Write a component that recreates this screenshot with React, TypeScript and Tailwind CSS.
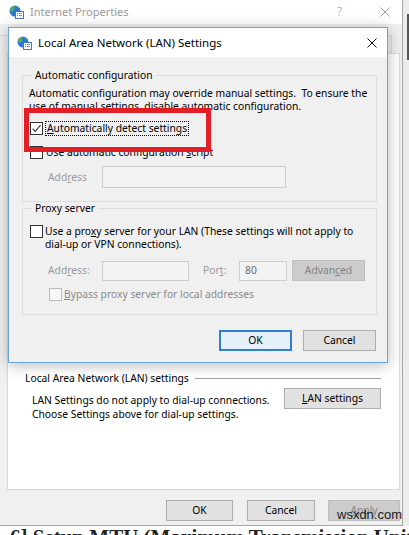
import type { ReactNode } from "react";

function AppIcon() {
  return (
    <svg width="15" height="14" viewBox="0 0 15 14" aria-hidden="true">
      <circle cx="6" cy="6" r="5.5" fill="#2c78d2" />
      <path d="M1.2 4.6C2 2.4 3.6 1 5.6.9c.4.8-.3 1.4-1 1.7-.9.4-.6 1.3.1 1.6.6.3.4 1-.3 1.2-.9.2-1.5.9-1.4 1.9-.9-.5-1.6-1.5-1.8-2.7z" fill="#5db548" />
      <path d="M7.4 1.2c1.4.2 2.7 1.1 3.4 2.3-.7.2-1.4-.1-1.9-.6-.5-.5-1.2-.6-1.5-1.7z" fill="#5db548" />
      <rect x="6.5" y="6.5" width="8" height="7" fill="#ffffff" stroke="#4a78b0" />
      <line x1="8" y1="8.5" x2="9" y2="8.5" stroke="#2c78d2" />
      <line x1="10" y1="8.5" x2="13" y2="8.5" stroke="#7c9cc4" />
      <line x1="8" y1="10.5" x2="9" y2="10.5" stroke="#2c78d2" />
      <line x1="10" y1="10.5" x2="13" y2="10.5" stroke="#7c9cc4" />
    </svg>
  );
}

function CloseGlyph({ color }: { color: string }) {
  return (
    <svg width="10" height="10" viewBox="0 0 10 10" aria-hidden="true">
      <path d="M0.5 0.5L9.5 9.5M9.5 0.5L0.5 9.5" stroke={color} strokeWidth="1" />
    </svg>
  );
}

function Box({ checked = false, disabled = false }: { checked?: boolean; disabled?: boolean }) {
  return (
    <span
      className={
        disabled
          ? "flex h-[13px] w-[13px] shrink-0 items-center justify-center border border-[#bcbcbc] bg-[#f7f7f7]"
          : "flex h-[13px] w-[13px] shrink-0 items-center justify-center border border-[#333333] bg-white"
      }
    >
      {checked && (
        <svg width="11" height="11" viewBox="0 0 11 11" aria-hidden="true">
          <path d="M1.6 5.6L4.2 8.4L9.6 2.2" fill="none" stroke="#333333" strokeWidth="1.1" />
        </svg>
      )}
    </span>
  );
}

function Btn({
  children,
  w,
  focused = false,
  disabled = false,
}: {
  children: ReactNode;
  w: string;
  focused?: boolean;
  disabled?: boolean;
}) {
  let cls = "flex h-[21px] items-center justify-center border border-[#adadad] bg-[#e1e1e1] text-black";
  if (focused) cls = "flex h-[21px] items-center justify-center border-2 border-[#2f80d4] bg-[#e5f1fb] text-black";
  if (disabled) cls = "flex h-[21px] items-center justify-center border border-[#bfbfbf] bg-[#cccccc] text-[#838383]";
  return <div className={`${cls} ${w}`}>{children}</div>;
}

function LanDialog() {
  return (
    <div className="absolute left-[8px] top-[27px] flex h-[336px] w-[380px] flex-col border border-[#6aa6d6] bg-[#f0f0f0] shadow-[0_2px_14px_rgba(0,0,0,0.28)]">
      <div className="flex h-[29px] items-center bg-white pl-[8px] pr-[10px]">
        <AppIcon />
        <span className="ml-[6px] text-[11.5px] text-black">Local Area Network (LAN) Settings</span>
        <span className="ml-auto flex">
          <CloseGlyph color="#111111" />
        </span>
      </div>

      <div className="flex flex-1 flex-col pl-[13px] pr-[10px] pt-[12px] leading-[13px]">
        <fieldset className="border border-[#dcdcdc] px-[6px] pb-[13px] pt-[5px]">
          <legend className="ml-[3px] px-[3px] leading-[13px]">Automatic configuration</legend>
          <div className="whitespace-nowrap">
            Automatic configuration may override manual settings.{"\u00a0 "}To ensure the
            <br />
            use of manual settings, disable automatic configuration.
          </div>
          <div className="ml-[1px] mt-[8px] flex items-center gap-[2px]">
            <Box checked />
            <span className="border border-dotted border-black px-[1px]">
              <span className="underline">A</span>utomatically detect settings
            </span>
          </div>
          <div className="ml-[1px] mt-[10px] flex items-center gap-[2px]">
            <Box />
            <span className="px-[1px]">
              Use automatic configuration <span className="underline">s</span>cript
            </span>
          </div>
          <div className="mt-[7px] flex items-center pl-[19px]">
            <span className="w-[54px] text-[#9a9a9a]">
              Add<span className="underline">r</span>ess
            </span>
            <div className="h-[22px] w-[184px] border border-[#cccccc] bg-[#f3f3f3]" />
          </div>
        </fieldset>

        <fieldset className="border border-[#dcdcdc] px-[6px] pb-[13px] pt-[10px]">
          <legend className="ml-[3px] px-[3px] leading-[13px]">Proxy server</legend>
          <div className="ml-[1px] flex items-start gap-[2px]">
            <Box />
            <div className="whitespace-nowrap">
              Use a pro<span className="underline">x</span>y server for your LAN (These settings will not apply to
              <br />
              dial-up or VPN connections).
            </div>
          </div>
          <div className="mt-[9px] flex items-center pl-[19px] text-[#9a9a9a]">
            <span className="w-[54px]">
              Add<span className="underline">r</span>ess:
            </span>
            <div className="h-[20px] w-[87px] border border-[#cccccc] bg-[#f3f3f3]" />
            <span className="ml-[14px] w-[36px]">
              Por<span className="underline">t</span>:
            </span>
            <div className="flex h-[20px] w-[48px] items-center border border-[#cccccc] bg-[#f3f3f3] pl-[5px] text-[#6d6d6d]">
              80
            </div>
            <div className="ml-[5px]">
              <Btn w="w-[73px]" disabled>
                <span>
                  Advan<span className="underline">c</span>ed
                </span>
              </Btn>
            </div>
          </div>
          <div className="mt-[7px] flex items-center gap-[2px] pl-[20px] text-[#8a8a8a]">
            <Box disabled />
            <span>
              <span className="underline">B</span>ypass proxy server for local addresses
            </span>
          </div>
        </fieldset>

        <div className="mt-[15px] flex justify-end gap-[11px] pr-[1px]">
          <Btn w="w-[73px]" focused>
            OK
          </Btn>
          <Btn w="w-[73px]">Cancel</Btn>
        </div>
      </div>
    </div>
  );
}

export default function App() {
  const tabWidths = ["w-[52px]", "w-[54px]", "w-[50px]", "w-[52px]", "w-[68px]", "w-[58px]", "w-[60px]"];
  return (
    <div className="relative h-[535px] w-[409px] overflow-hidden bg-white font-['Noto_Sans',sans-serif] text-[10.3px] text-black">
      <div className="flex">
        <div className="flex w-[403px] flex-col border-b border-r border-[#a8a8a8] bg-[#f0f0f0]">
          <div className="flex h-[24px] items-center bg-white pl-[9px] pr-[12px]">
            <AppIcon />
            <span className="ml-[6px] text-[11px] text-[#9a9a9a]">Internet Properties</span>
            <span className="ml-auto text-[12px] font-light text-[#9a9a9a]">?</span>
            <span className="ml-[38px] flex">
              <CloseGlyph color="#9a9a9a" />
            </span>
          </div>

          <div className="flex h-[29px] items-end justify-end overflow-hidden pr-[10px]">
            {tabWidths.map((w) => (
              <div key={w} className={`h-[18px] shrink-0 border-l border-r border-t border-[#d9d9d9] bg-[#f0f0f0] ${w}`} />
            ))}
          </div>

          <div className="ml-[7px] mr-[2px] h-[437px] border border-[#d9d9d9] bg-white pl-[17px] pr-[18px] pt-[318px] leading-[13px]">
            <div className="flex items-center gap-[6px]">
              <span>Local Area Network (LAN) settings</span>
              <div className="h-px flex-1 bg-[#a0a0a0]" />
            </div>
            <div className="mt-[3px] flex items-start justify-between pl-[7px]">
              <div className="mt-[5px] leading-[14px]">
                LAN Settings do not apply to dial-up connections.
                <br />
                Choose Settings above for dial-up settings.
              </div>
              <Btn w="w-[97px]">
                <span>
                  <span className="underline">L</span>AN settings
                </span>
              </Btn>
            </div>
          </div>

          <div className="flex justify-end pb-[4px] pr-[2px] pt-[10px]">
            <Btn w="w-[67px]">OK</Btn>
            <div className="ml-[14px]">
              <Btn w="w-[68px]">Cancel</Btn>
            </div>
            <div className="ml-[13px]">
              <Btn w="w-[72px]" disabled>
                <span>
                  <span className="underline">A</span>pply
                </span>
              </Btn>
            </div>
          </div>
        </div>
        <div className="flex w-[6px] flex-col bg-[#ececec]">
          <div className="ml-auto mt-[14px] h-[46px] w-[2px] bg-[#555555]" />
        </div>
      </div>

      <div className="flex h-[12px]">
        <div className="w-[25px] bg-[#d6d6d6]" />
        <div className="mt-[1px] whitespace-nowrap pl-[10px] font-['Liberation_Serif',serif] text-[21px] font-bold leading-[21px] text-[#222222]">
          6] Setup MTU (Maximum Transmission Unit)
        </div>
      </div>

      <div className="absolute left-[337px] top-[507px] font-['Liberation_Sans',sans-serif] text-[13px] leading-[15px] text-[#1a1a1a]">
        wsxdn.com
      </div>

      <LanDialog />

      <div className="absolute left-[24px] top-[108px] h-[44px] w-[187px] border-[5px] border-[#e31e24]" />
    </div>
  );
}
